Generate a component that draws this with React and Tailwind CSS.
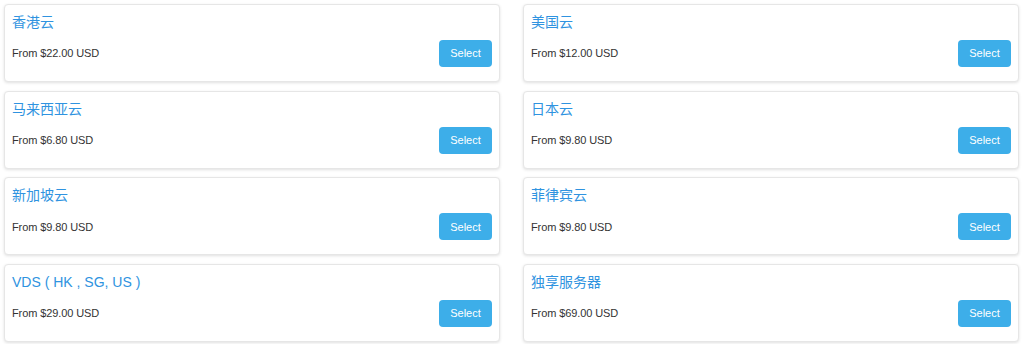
import React from 'react';

const products = [
  { name: '香港云', price: '$22.00' },
  { name: '美国云', price: '$12.00' },
  { name: '马来西亚云', price: '$6.80' },
  { name: '日本云', price: '$9.80' },
  { name: '新加坡云', price: '$9.80' },
  { name: '菲律宾云', price: '$9.80' },
  { name: 'VDS ( HK , SG, US )', price: '$29.00' },
  { name: '独享服务器', price: '$69.00' },
];

function ProductCard({ name, price }) {
  return (
    <div className="h-[78px] rounded border border-[#e6e6e6] bg-white shadow-[0_1px_3px_rgba(0,0,0,0.12)] px-[7px] pt-[7px]">
      <div className="text-[14px] leading-5 text-[#2f93e0]">{name}</div>
      <div className="mt-2 flex items-center justify-between">
        <span className="text-[11px] tracking-[-0.1px] text-[#333]">From {price} USD</span>
        <button className="h-[27px] w-[53px] rounded bg-[#3daee9] text-[11px] text-white">
          Select
        </button>
      </div>
    </div>
  );
}

export default function App() {
  return (
    <div
      className="min-h-screen bg-white pl-1 pt-1"
      style={{ fontFamily: '"Liberation Sans", Arial, "Noto Sans CJK SC", sans-serif' }}
    >
      <div className="grid grid-cols-[496px_496px] gap-x-[23px] gap-y-[8.67px]">
        {products.map((p) => (
          <ProductCard key={p.name} {...p} />
        ))}
      </div>
    </div>
  );
}
